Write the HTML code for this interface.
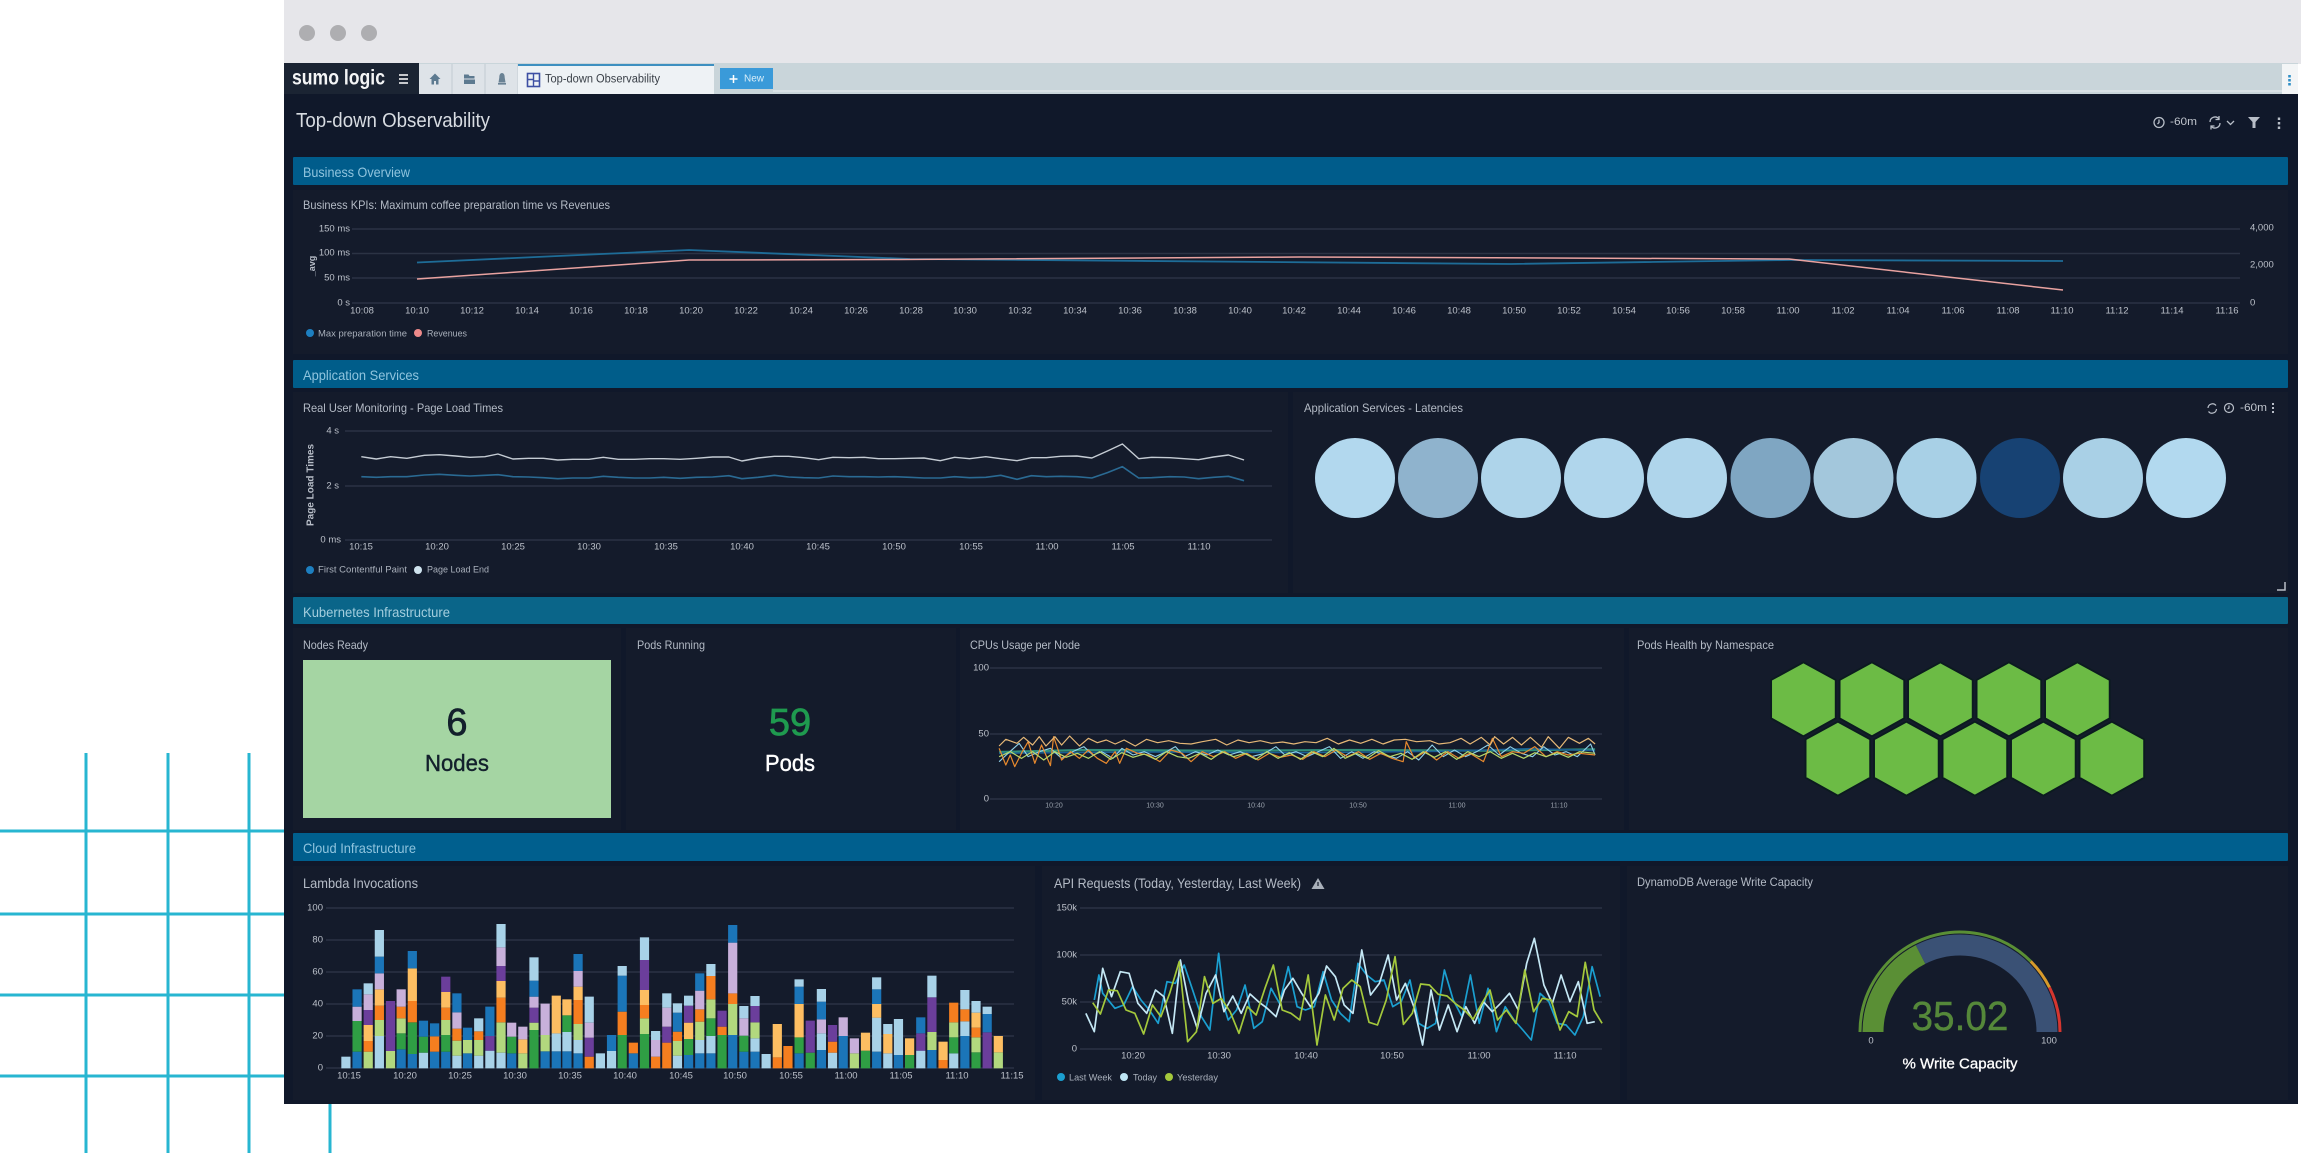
<!DOCTYPE html>
<html><head><meta charset="utf-8"><title>Top-down Observability</title>
<style>
html,body{margin:0;padding:0;background:#fff;width:2301px;height:1154px;overflow:hidden}
svg{display:block}
body>svg{filter:blur(.35px)}
text{font-family:"Liberation Sans",sans-serif;dominant-baseline:central}
.ln{fill:none;vector-effect:non-scaling-stroke;stroke-linejoin:round}
.tk{font-size:9.5px;fill:#bcc1ca}
.pt{font-size:12px;fill:#b4bbc6}
.bt{font-size:14px;fill:#8fc4de}
.lg{font-size:9.5px;fill:#aab1bc}
.gr{stroke:#2b3344;stroke-width:1.5}
.m{text-anchor:middle}
.e{text-anchor:end}
.bars path{fill:none;stroke-width:19}
.d{stroke:#1b75b8}.l{stroke:#a8d2e8}.g{stroke:#2f9e44}.h{stroke:#b2d87e}.o{stroke:#f57e1f}.y{stroke:#fdbe62}.p{stroke:#6b3e9b}.q{stroke:#c8b0da}
</style></head><body>
<svg width="2301" height="1154" viewBox="0 0 2301 1154" xmlns="http://www.w3.org/2000/svg">
<!-- background grid decoration -->
<g stroke="#27b6d1" stroke-width="3" fill="none">
<path d="M86 753V1153M168 753V1153M249 753V1153M330 1100V1153M0 831H290M0 914H290M0 995H290M0 1076H290"/>
</g>
<!-- browser chrome -->
<rect x="284" y="0" width="2017" height="64" fill="#e6e6ea"/>
<ellipse cx="307" cy="33" rx="8" ry="8" fill="#aeaeb1"/><ellipse cx="338" cy="33" rx="8" ry="8" fill="#aeaeb1"/><ellipse cx="369" cy="33" rx="8" ry="8" fill="#aeaeb1"/>
<!-- nav bar -->
<rect x="284" y="63" width="2014" height="31" fill="#c9d5da"/>
<rect x="773" y="90" width="1509" height="2" fill="#d9e1e5"/>
<rect x="419" y="64" width="99" height="30" fill="#dee3e8"/>
<path d="M452 64V94M485 64V94M518 64V94" stroke="#ccd3d9" stroke-width="1.5"/>
<rect x="284" y="63" width="135" height="31" fill="#1b2433"/>
<text x="292" y="78" font-size="21" font-weight="700" fill="#f4f5f6" textLength="93" lengthAdjust="spacingAndGlyphs">sumo logic</text>
<path d="M399 75h9M399 79h9M399 83h9" stroke="#fff" stroke-width="1.500"/>
<path d="M435 73.500l-5.500 5.500h2v5.500h2.500v-3.500h2v3.500h2.500v-5.500h2z" fill="#5d7a90"/>
<path d="M464 74.500h4.500l1 1.500h5v2.500h-10.500zM464 79.500h11v4.500h-11z" fill="#5d7a90"/>
<path d="M502 73c-1.800 0-2.700 1.800-2.700 4.500l-.8 5h7l-.8-5c0-2.700-.9-4.500-2.700-4.500zM498 83h8v1.600h-8z" fill="#6a8294"/>
<rect x="518" y="65" width="196" height="29" fill="#eef2f5"/>
<rect x="518" y="64" width="196" height="2" fill="#3d8fc0"/>
<rect x="527.500" y="73.500" width="12" height="13" fill="none" stroke="#3d4fa3" stroke-width="1.6"/>
<path d="M533.500 73v14M528 79.500h6M533 81h6" stroke="#3d4fa3" stroke-width="1.400"/>
<text x="545" y="79.500" font-size="11.500" fill="#3a4048" textLength="115" lengthAdjust="spacingAndGlyphs">Top-down Observability</text>
<rect x="720" y="68" width="53" height="21" fill="#3a9ad9"/>
<path d="M733.500 75v8M729.500 79h8" stroke="#fff" stroke-width="1.500"/>
<text x="744" y="79" font-size="10" fill="#d9eefa" textLength="20" lengthAdjust="spacingAndGlyphs">New</text>
<rect x="2282" y="64" width="16" height="30" fill="#f3f5f6"/>
<path d="M2289.500 75v2.500M2289.500 79v2.500M2289.500 83v2.500" stroke="#2f8fc7" stroke-width="2.600"/>
<!-- dark panel -->
<rect x="284" y="94" width="2014" height="1010" fill="#10182a"/>
<text x="296" y="121" font-size="20" fill="#d8dce2" textLength="194" lengthAdjust="spacingAndGlyphs">Top-down Observability</text>
<!-- toolbar -->
<g fill="none" stroke="#b8bec8" stroke-width="1.300">
<circle cx="2159" cy="122.500" r="5"/><path d="M2159 119.500v3l-1.500 1.500"/>
<path d="M2210 122a5 5 0 0 1 9-3M2220 123a5 5 0 0 1-9 3"/><path d="M2219 116v3.500h-3.500M2211 129.500v-3.500h3.500"/>
<path d="M2227 121l3.500 3.500 3.500-3.500"/>
</g>
<text x="2170" y="122" font-size="11" fill="#c0c5cd" textLength="27" lengthAdjust="spacingAndGlyphs">-60m</text>
<path d="M2248 117h12l-4.500 5v6h-3v-6z" fill="#b8bec8"/>
<path d="M2279 117.500v2.500M2279 122v2.500M2279 126.500v2.500" stroke="#b8bec8" stroke-width="2.400"/>
<!-- section bars -->
<rect x="293" y="157" width="1995" height="28" rx="1" fill="#005c8b"/>
<rect x="293" y="360" width="1995" height="28" rx="1" fill="#005d8a"/>
<rect x="293" y="597" width="1995" height="27" rx="1" fill="#0a6589"/>
<rect x="293" y="833" width="1995" height="28" rx="1" fill="#005f8e"/>
<text class="bt" x="303" y="172" textLength="107" lengthAdjust="spacingAndGlyphs">Business Overview</text>
<text class="bt" x="303" y="375" textLength="116" lengthAdjust="spacingAndGlyphs">Application Services</text>
<text class="bt" x="303" y="612" textLength="147" lengthAdjust="spacingAndGlyphs" style="fill:#a3cede">Kubernetes Infrastructure</text>
<text class="bt" x="303" y="848" textLength="113" lengthAdjust="spacingAndGlyphs">Cloud Infrastructure</text>
<!-- panels -->
<g fill="#141b2b">
<rect x="293" y="190" width="1995" height="164"/>
<rect x="293" y="392" width="995" height="201"/><rect x="1293" y="392" width="995" height="201"/>
<rect x="293" y="628" width="328" height="202"/><rect x="626" y="628" width="330" height="202"/><rect x="960" y="628" width="664" height="202"/><rect x="1629" y="628" width="659" height="202"/>
<rect x="293" y="866" width="742" height="234"/><rect x="1042" y="866" width="578" height="234"/><rect x="1627" y="866" width="661" height="234"/>
</g>
<!-- business chart -->
<text class="pt" x="303" y="205" textLength="307" lengthAdjust="spacingAndGlyphs">Business KPIs: Maximum coffee preparation time vs Revenues</text>
<path class="gr" d="M352 229H2240M352 253.500H2240M352 278H2240M352 303H2240"/>
<g class="tk e"><text x="350" y="229">150 ms</text><text x="350" y="253">100 ms</text><text x="350" y="278">50 ms</text><text x="350" y="303">0 s</text></g>
<text transform="translate(312 266) rotate(-90)" class="m" font-size="9" font-weight="700" fill="#b8bec8">_avg</text>
<g class="tk"><text x="2250" y="228">4,000</text><text x="2250" y="265">2,000</text><text x="2250" y="303">0</text></g>
<path class="ln" stroke="#1e6c97" stroke-width="1.800" d="M417 262.500L689 250 910 259 1511 264 1790 260 2063 261"/>
<path class="ln" stroke="#e9a2a0" stroke-width="1.500" d="M417 279L689 260 900 259.500 1300 257 1789 259 2063 290"/>
<g class="tk m">
<text x="362" y="311">10:08</text><text x="417" y="311">10:10</text><text x="472" y="311">10:12</text><text x="527" y="311">10:14</text><text x="581" y="311">10:16</text><text x="636" y="311">10:18</text><text x="691" y="311">10:20</text><text x="746" y="311">10:22</text><text x="801" y="311">10:24</text><text x="856" y="311">10:26</text><text x="911" y="311">10:28</text><text x="965" y="311">10:30</text><text x="1020" y="311">10:32</text><text x="1075" y="311">10:34</text><text x="1130" y="311">10:36</text><text x="1185" y="311">10:38</text><text x="1240" y="311">10:40</text><text x="1294" y="311">10:42</text><text x="1349" y="311">10:44</text><text x="1404" y="311">10:46</text><text x="1459" y="311">10:48</text><text x="1514" y="311">10:50</text><text x="1569" y="311">10:52</text><text x="1624" y="311">10:54</text><text x="1678" y="311">10:56</text><text x="1733" y="311">10:58</text><text x="1788" y="311">11:00</text><text x="1843" y="311">11:02</text><text x="1898" y="311">11:04</text><text x="1953" y="311">11:06</text><text x="2008" y="311">11:08</text><text x="2062" y="311">11:10</text><text x="2117" y="311">11:12</text><text x="2172" y="311">11:14</text><text x="2227" y="311">11:16</text>
</g>
<circle cx="310" cy="333" r="4" fill="#1d7fc0"/><text class="lg" x="318" y="334" textLength="89" lengthAdjust="spacingAndGlyphs">Max preparation time</text>
<circle cx="418" cy="333" r="4" fill="#ee8a8a"/><text class="lg" x="427" y="334" textLength="40" lengthAdjust="spacingAndGlyphs">Revenues</text>
<!-- RUM chart -->
<text class="pt" x="303" y="408" textLength="200" lengthAdjust="spacingAndGlyphs">Real User Monitoring - Page Load Times</text>
<path class="gr" d="M345 431H1272M345 486H1272M345 540H1272"/>
<g class="tk e"><text x="339" y="431">4 s</text><text x="339" y="486">2 s</text><text x="341" y="540">0 ms</text></g>
<text transform="translate(311 485) rotate(-90)" class="m" font-size="10" font-weight="700" fill="#b8bec8">Page Load Times</text>
<svg x="280" y="360" width="1020" height="240" viewBox="0 0 1568 720" preserveAspectRatio="none">
<path class="ln" stroke="#c5ccd4" stroke-width="1.400" d="M125 290L148 297 170 290 195 295 222 286 245 284 270 288 292 292 315 290 335 282 358 297 382 295 405 295 427 300 450 298 475 298 497 292 520 298 545 298 568 296 590 296 615 298 640 295 665 291 690 291 710 303 735 294 760 289 782 289 805 293 828 299 850 292 875 293 898 292 920 296 945 296 968 295 990 294 1015 302 1037 292 1060 296 1085 290 1108 296 1133 302 1155 293 1178 293 1200 289 1225 288 1248 294 1272 273 1295 252 1320 296 1340 292 1368 293 1390 296 1412 299 1435 291 1458 285 1482 300"/>
<path class="ln" stroke="#2a6a93" stroke-width="1.600" d="M125 350L148 352 170 350 195 350 222 345 245 343 270 346 292 348 315 346 335 344 358 350 382 351 405 353 427 356 450 354 475 354 497 349 520 352 545 354 568 354 590 352 615 355 640 352 665 351 690 347 710 356 735 352 760 346 782 351 805 353 828 354 850 348 875 350 898 350 920 351 945 350 968 352 990 354 1015 354 1037 350 1060 353 1085 352 1108 346 1133 358 1155 347 1178 350 1200 349 1225 350 1248 354 1272 338 1295 320 1320 354 1340 353 1368 350 1390 351 1412 356 1435 352 1458 349 1482 362"/>
</svg>
<g class="tk m">
<text x="361" y="547">10:15</text><text x="437" y="547">10:20</text><text x="513" y="547">10:25</text><text x="589" y="547">10:30</text><text x="666" y="547">10:35</text><text x="742" y="547">10:40</text><text x="818" y="547">10:45</text><text x="894" y="547">10:50</text><text x="971" y="547">10:55</text><text x="1047" y="547">11:00</text><text x="1123" y="547">11:05</text><text x="1199" y="547">11:10</text>
</g>
<circle cx="310" cy="570" r="4" fill="#1d7fc0"/><text class="lg" x="318" y="570" textLength="89" lengthAdjust="spacingAndGlyphs">First Contentful Paint</text>
<circle cx="418" cy="570" r="4" fill="#cfe3ee"/><text class="lg" x="427" y="570" textLength="62" lengthAdjust="spacingAndGlyphs">Page Load End</text>
<!-- Latencies -->
<text class="pt" x="1304" y="408" textLength="159" lengthAdjust="spacingAndGlyphs">Application Services - Latencies</text>
<g fill="none" stroke="#b8bec8" stroke-width="1.200">
<path d="M2208 408a4.500 4.500 0 0 1 8-2.500M2216.500 409a4.500 4.500 0 0 1-8 2.500"/><circle cx="2229" cy="408" r="4.500"/><path d="M2229 405.500v2.500l-1.500 1"/>
</g>
<text x="2240" y="408" font-size="11" fill="#c0c5cd" textLength="27" lengthAdjust="spacingAndGlyphs">-60m</text>
<path d="M2273 403v2M2273 407v2M2273 411v2" stroke="#b8bec8" stroke-width="2"/>
<circle cx="1355" cy="478" r="40" fill="#b2d8ee"/><circle cx="1438" cy="478" r="40" fill="#8fb3cd"/><circle cx="1521" cy="478" r="40" fill="#aed4ea"/><circle cx="1604" cy="478" r="40" fill="#b0d6ec"/><circle cx="1687" cy="478" r="40" fill="#afd5eb"/><circle cx="1770.500" cy="478" r="40" fill="#7fa6c2"/><circle cx="1853.500" cy="478" r="40" fill="#a3c7dc"/><circle cx="1936.500" cy="478" r="40" fill="#a8d0e6"/><circle cx="2020" cy="478" r="40" fill="#174273"/><circle cx="2103" cy="478" r="40" fill="#a9d0e6"/><circle cx="2186" cy="478" r="40" fill="#b2d9ef"/>
<path d="M2285 582v8h-8" fill="none" stroke="#b8bec8" stroke-width="1.500"/>
<!-- K8s -->
<text class="pt" x="303" y="645" textLength="65" lengthAdjust="spacingAndGlyphs">Nodes Ready</text>
<rect x="303" y="660" width="308" height="158" fill="#a5d5a3"/>
<text class="m" x="457" y="723" font-size="38" fill="#13202c" stroke="#13202c" stroke-width=".7">6</text>
<text class="m" x="457" y="763" font-size="23" fill="#13202c" stroke="#13202c" stroke-width=".4" textLength="64" lengthAdjust="spacingAndGlyphs">Nodes</text>
<text class="pt" x="637" y="645" textLength="68" lengthAdjust="spacingAndGlyphs">Pods Running</text>
<text class="m" x="790" y="723" font-size="38" fill="#1f9a4f" stroke="#1f9a4f" stroke-width=".7">59</text>
<text class="m" x="790" y="763" font-size="23" fill="#fff" stroke="#fff" stroke-width=".4" textLength="50" lengthAdjust="spacingAndGlyphs">Pods</text>
<text class="pt" x="970" y="645" textLength="110" lengthAdjust="spacingAndGlyphs">CPUs Usage per Node</text>
<path class="gr" d="M990 668H1602M990 734H1602M990 799H1602"/>
<g class="tk e"><text x="989" y="668">100</text><text x="989" y="734">50</text><text x="989" y="799">0</text></g>
<g class="m" font-size="7" fill="#9aa2ad"><text x="1054" y="806">10:20</text><text x="1155" y="806">10:30</text><text x="1256" y="806">10:40</text><text x="1358" y="806">10:50</text><text x="1457" y="806">11:00</text><text x="1559" y="806">11:10</text></g>
<svg x="950" y="620" width="700" height="220" viewBox="0 0 1568 660" preserveAspectRatio="none">
<path class="ln" stroke="#2f8f7a" stroke-width="2.200" d="M110 396L300 390 600 392 900 390 1200 392 1445 388"/>
<path class="ln" stroke="#1b5f94" stroke-width="1.500" d="M110 400L400 396 800 398 1100 394 1300 386 1445 392"/>
<path class="ln" stroke="#8fd0e8" stroke-width="1.100" d="M110 425L130 400 155 370 175 410 200 395 225 385 250 415 275 395 300 380 320 405 340 395 365 415 385 385 410 405 435 395 460 410 485 395 505 380 525 410 550 395 575 405 600 390 625 405 650 395 675 410 705 400 730 380 750 405 775 395 800 410 825 395 850 380 875 415 900 395 925 415 950 395 975 405 1000 415 1025 395 1050 420 1080 375 1105 410 1130 390 1155 410 1180 395 1205 375 1230 405 1255 380 1280 400 1305 410 1330 380 1355 405 1380 395 1405 410 1435 372 1445 405"/>
<path class="ln" stroke="#e88a2e" stroke-width="1.200" d="M110 385L125 435 135 405 145 440 160 400 175 365 190 430 205 375 225 437 232 350 250 420 270 395 290 415 310 390 330 415 350 430 370 395 380 430 395 385 420 400 445 405 470 425 495 390 520 400 540 425 565 395 590 410 615 395 640 415 665 400 690 420 715 400 740 412 765 405 790 418 815 395 840 410 865 390 890 410 915 395 940 418 965 400 990 415 1015 425 1022 365 1040 415 1065 395 1090 420 1115 395 1140 415 1165 400 1195 425 1215 355 1235 410 1260 395 1285 400 1310 380 1335 410 1360 395 1385 405 1410 400 1445 405"/>
<path class="ln" stroke="#b7d86a" stroke-width="1.200" d="M110 410L135 395 160 415 185 395 210 420 235 395 260 412 285 400 310 415 335 395 360 418 385 398 410 412 435 402 460 418 485 395 510 410 535 415 560 400 585 418 610 395 635 410 660 400 685 418 710 395 735 415 760 398 785 418 810 395 835 410 860 385 885 415 910 400 935 415 960 392 985 410 1010 400 1035 418 1060 395 1085 412 1110 395 1135 418 1160 395 1185 410 1210 395 1235 415 1260 400 1285 415 1310 398 1335 410 1360 398 1385 412 1410 395 1445 400"/>
<path class="ln" stroke="#e6b877" stroke-width="1.200" d="M110 378L125 358 150 370 165 352 185 375 200 350 215 378 235 350 250 375 268 348 290 378 310 355 330 368 350 360 370 372 390 360 415 378 440 358 465 368 490 362 515 370 540 372 565 365 595 358 620 375 645 360 670 368 695 362 720 370 745 366 770 372 795 365 820 368 845 355 870 372 895 360 920 370 945 358 970 372 995 360 1020 358 1045 365 1075 362 1095 372 1120 368 1145 355 1165 372 1190 352 1210 375 1220 350 1240 372 1260 352 1280 375 1300 352 1325 382 1340 350 1365 385 1385 352 1410 370 1430 355 1445 372"/>
</svg>
<text class="pt" x="1637" y="645" textLength="137" lengthAdjust="spacingAndGlyphs">Pods Health by Namespace</text>
<svg x="1618" y="620" width="681" height="220" viewBox="0 0 1561 660" preserveAspectRatio="none">
<path class="ln" style="fill:#6cbb45" stroke="#0b1b1f" stroke-width="1.800" d="M425 127l74 53v115l-74 54-74-54v-115zM582 127l74 53v115l-74 54-74-54v-115zM739 127l74 53v115l-74 54-74-54v-115zM896 127l74 53v115l-74 54-74-54v-115zM1053 127l74 53v115l-74 54-74-54v-115zM504 305l74 53v115l-74 54-74-54v-115zM661 305l74 53v115l-74 54-74-54v-115zM818 305l74 53v115l-74 54-74-54v-115zM975 305l74 53v115l-74 54-74-54v-115zM1132 305l74 53v115l-74 54-74-54v-115z"/>
</svg>
<!-- Lambda -->
<text class="pt" x="303" y="883" style="font-size:14px" textLength="115" lengthAdjust="spacingAndGlyphs">Lambda Invocations</text>
<path class="gr" d="M326 908H1014M326 940H1014M326 972H1014M326 1004H1014M326 1036H1014M326 1068H1014"/>
<g class="tk e"><text x="323" y="908">100</text><text x="323" y="940">80</text><text x="323" y="972">60</text><text x="323" y="1004">40</text><text x="323" y="1036">20</text><text x="323" y="1068">0</text></g>
<svg x="280" y="860" width="760" height="250" viewBox="0 0 1568 750" preserveAspectRatio="none" class="bars">
<path class="l" d="M136 625V590"/>
<path class="d" d="M159 625V575"/><path class="g" d="M159 575V483"/><path class="q" d="M159 483V440"/><path class="d" d="M159 440V388"/>
<path class="h" d="M182 625V575"/><path class="o" d="M182 575V543"/><path class="y" d="M182 543V495"/><path class="p" d="M182 495V450"/><path class="q" d="M182 450V403"/><path class="l" d="M182 403V370"/>
<path class="l" d="M205 625V528"/><path class="h" d="M205 528V480"/><path class="o" d="M205 480V437"/><path class="y" d="M205 437V388"/><path class="q" d="M205 388V340"/><path class="d" d="M205 340V290"/><path class="l" d="M205 290V210"/>
<path class="h" d="M228 625V573"/><path class="p" d="M228 573V423"/>
<path class="d" d="M250 625V568"/><path class="g" d="M250 568V520"/><path class="h" d="M250 520V475"/><path class="o" d="M250 475V440"/><path class="q" d="M250 440V388"/>
<path class="d" d="M273 625V582"/><path class="g" d="M273 582V487"/><path class="o" d="M273 487V423"/><path class="y" d="M273 423V325"/><path class="d" d="M273 325V273"/>
<path class="l" d="M296 625V578"/><path class="g" d="M296 578V530"/><path class="d" d="M296 530V482"/>
<path class="d" d="M319 625V575"/><path class="o" d="M319 575V529"/><path class="d" d="M319 529V490"/>
<path class="d" d="M342 625V575"/><path class="g" d="M342 575V525"/><path class="h" d="M342 525V480"/><path class="o" d="M342 480V443"/><path class="y" d="M342 443V396"/><path class="p" d="M342 396V350"/>
<path class="l" d="M365 625V587"/><path class="h" d="M365 587V542"/><path class="o" d="M365 542V506"/><path class="q" d="M365 506V457"/><path class="d" d="M365 457V400"/>
<path class="d" d="M387 625V580"/><path class="h" d="M387 580V540"/><path class="d" d="M387 540V503"/>
<path class="l" d="M410 625V587"/><path class="h" d="M410 587V540"/><path class="o" d="M410 540V514"/><path class="l" d="M410 514V475"/>
<path class="l" d="M433 625V572"/><path class="p" d="M433 572V528"/><path class="d" d="M433 528V440"/>
<path class="l" d="M456 625V578"/><path class="h" d="M456 578V487"/><path class="o" d="M456 487V413"/><path class="y" d="M456 413V363"/><path class="p" d="M456 363V318"/><path class="q" d="M456 318V262"/><path class="l" d="M456 262V192"/>
<path class="d" d="M478 625V580"/><path class="g" d="M478 580V530"/><path class="q" d="M478 530V488"/>
<path class="h" d="M501 625V580"/><path class="y" d="M501 580V538"/><path class="q" d="M501 538V500"/>
<path class="g" d="M524 625V510"/><path class="h" d="M524 510V488"/><path class="p" d="M524 488V443"/><path class="q" d="M524 443V410"/><path class="d" d="M524 410V362"/><path class="l" d="M524 362V292"/>
<path class="d" d="M547 625V574"/><path class="h" d="M547 574V525"/><path class="q" d="M547 525V431"/>
<path class="d" d="M570 625V574"/><path class="l" d="M570 574V520"/><path class="y" d="M570 520V407"/>
<path class="d" d="M592 625V574"/><path class="l" d="M592 574V516"/><path class="g" d="M592 516V466"/><path class="y" d="M592 466V418"/>
<path class="d" d="M615 625V580"/><path class="l" d="M615 580V540"/><path class="h" d="M615 540V492"/><path class="o" d="M615 492V420"/><path class="y" d="M615 420V380"/><path class="q" d="M615 380V333"/><path class="d" d="M615 333V282"/>
<path class="o" d="M638 625V590"/><path class="p" d="M638 590V533"/><path class="q" d="M638 533V488"/><path class="l" d="M638 488V410"/>
<path class="l" d="M661 625V580"/>
<path class="l" d="M684 625V573"/><path class="d" d="M684 573V525"/>
<path class="g" d="M706 625V525"/><path class="o" d="M706 525V455"/><path class="d" d="M706 455V347"/><path class="l" d="M706 347V318"/>
<path class="d" d="M729 625V580"/><path class="o" d="M729 580V548"/>
<path class="g" d="M752 625V522"/><path class="h" d="M752 522V475"/><path class="o" d="M752 475V435"/><path class="y" d="M752 435V390"/><path class="p" d="M752 390V300"/><path class="l" d="M752 300V232"/>
<path class="o" d="M775 625V590"/><path class="q" d="M775 590V540"/><path class="l" d="M775 540V513"/>
<path class="o" d="M798 625V548"/><path class="p" d="M798 548V500"/><path class="q" d="M798 500V443"/><path class="l" d="M798 443V400"/>
<path class="l" d="M820 625V587"/><path class="h" d="M820 587V543"/><path class="o" d="M820 543V515"/><path class="d" d="M820 515V458"/><path class="l" d="M820 458V430"/>
<path class="d" d="M843 625V585"/><path class="g" d="M843 585V537"/><path class="y" d="M843 537V488"/><path class="p" d="M843 488V437"/><path class="l" d="M843 437V407"/>
<path class="d" d="M866 625V580"/><path class="l" d="M866 580V540"/><path class="h" d="M866 540V485"/><path class="o" d="M866 485V448"/><path class="q" d="M866 448V392"/><path class="d" d="M866 392V340"/>
<path class="d" d="M889 625V580"/><path class="l" d="M889 580V528"/><path class="g" d="M889 528V475"/><path class="h" d="M889 475V418"/><path class="o" d="M889 418V348"/><path class="l" d="M889 348V312"/>
<path class="g" d="M912 625V525"/><path class="o" d="M912 525V500"/><path class="p" d="M912 500V452"/>
<path class="d" d="M934 625V525"/><path class="h" d="M934 525V432"/><path class="o" d="M934 432V400"/><path class="q" d="M934 400V248"/><path class="d" d="M934 248V195"/>
<path class="d" d="M957 625V575"/><path class="g" d="M957 575V527"/><path class="q" d="M957 527V475"/><path class="l" d="M957 475V438"/>
<path class="d" d="M980 625V575"/><path class="l" d="M980 575V535"/><path class="h" d="M980 535V487"/><path class="p" d="M980 487V438"/><path class="l" d="M980 438V408"/>
<path class="l" d="M1003 625V582"/>
<path class="o" d="M1026 625V592"/><path class="y" d="M1026 592V492"/>
<path class="o" d="M1048 625V558"/>
<path class="d" d="M1071 625V580"/><path class="g" d="M1071 580V532"/><path class="y" d="M1071 532V432"/><path class="d" d="M1071 432V380"/><path class="l" d="M1071 380V358"/>
<path class="g" d="M1094 625V578"/><path class="p" d="M1094 578V482"/>
<path class="d" d="M1117 625V570"/><path class="l" d="M1117 570V520"/><path class="q" d="M1117 520V478"/><path class="d" d="M1117 478V425"/><path class="l" d="M1117 425V387"/>
<path class="l" d="M1140 625V578"/><path class="o" d="M1140 578V545"/><path class="p" d="M1140 545V495"/>
<path class="d" d="M1162 625V528"/><path class="q" d="M1162 528V472"/>
<path class="h" d="M1185 625V580"/><path class="q" d="M1185 580V535"/>
<path class="g" d="M1208 625V572"/><path class="y" d="M1208 572V518"/>
<path class="d" d="M1231 625V575"/><path class="l" d="M1231 575V473"/><path class="y" d="M1231 473V432"/><path class="d" d="M1231 432V388"/><path class="l" d="M1231 388V352"/>
<path class="l" d="M1254 625V580"/><path class="y" d="M1254 580V522"/><path class="l" d="M1254 522V492"/>
<path class="d" d="M1276 625V585"/><path class="l" d="M1276 585V477"/>
<path class="g" d="M1299 625V585"/><path class="y" d="M1299 585V535"/>
<path class="l" d="M1322 625V572"/><path class="p" d="M1322 572V520"/><path class="d" d="M1322 520V472"/>
<path class="d" d="M1345 625V570"/><path class="h" d="M1345 570V516"/><path class="p" d="M1345 516V412"/><path class="l" d="M1345 412V347"/>
<path class="o" d="M1368 625V600"/><path class="y" d="M1368 600V545"/>
<path class="l" d="M1390 625V580"/><path class="g" d="M1390 580V532"/><path class="h" d="M1390 532V487"/><path class="o" d="M1390 487V428"/>
<path class="d" d="M1413 625V528"/><path class="l" d="M1413 528V484"/><path class="o" d="M1413 484V448"/><path class="l" d="M1413 448V390"/>
<path class="g" d="M1436 625V577"/><path class="h" d="M1436 577V532"/><path class="o" d="M1436 532V503"/><path class="y" d="M1436 503V458"/><path class="l" d="M1436 458V423"/>
<path class="p" d="M1459 625V517"/><path class="d" d="M1459 517V462"/><path class="l" d="M1459 462V440"/>
<path class="h" d="M1482 625V577"/><path class="y" d="M1482 577V528"/>
</svg>
<g class="tk m">
<text x="349" y="1076">10:15</text><text x="405" y="1076">10:20</text><text x="460" y="1076">10:25</text><text x="515" y="1076">10:30</text><text x="570" y="1076">10:35</text><text x="625" y="1076">10:40</text><text x="681" y="1076">10:45</text><text x="735" y="1076">10:50</text><text x="791" y="1076">10:55</text><text x="846" y="1076">11:00</text><text x="901" y="1076">11:05</text><text x="957" y="1076">11:10</text><text x="1012" y="1076">11:15</text>
</g>
<!-- API -->
<text class="pt" x="1054" y="883" style="font-size:14px" textLength="247" lengthAdjust="spacingAndGlyphs">API Requests (Today, Yesterday, Last Week)</text>
<path d="M1318 878l6.500 11h-13z" fill="#a9b0ba"/><path d="M1318 882v4" stroke="#151c2c" stroke-width="1.200"/>
<path class="gr" d="M1080 908H1602M1080 955H1602M1080 1002H1602M1080 1049H1602"/>
<g class="tk e"><text x="1077" y="908">150k</text><text x="1077" y="955">100k</text><text x="1077" y="1002">50k</text><text x="1077" y="1049">0</text></g>
<svg x="1030" y="860" width="600" height="250" viewBox="0 0 1568 750" preserveAspectRatio="none">
<path class="ln" stroke="#1b9fd0" stroke-width="1.700" d="M168 420L180 345 190 400 222 445 245 435 268 380 290 420 312 450 335 490 358 365 380 370 403 315 425 390 448 470 470 510 493 280 510 450 518 480 540 450 562 375 585 505 607 485 630 385 652 430 675 320 698 440 720 450 743 440 766 335 788 420 811 460 834 485 857 310 880 345 902 365 925 360 948 440 970 425 993 360 1016 490 1038 505 1060 490 1083 330 1106 420 1129 470 1151 345 1174 490 1197 385 1219 515 1242 440 1265 480 1288 510 1310 540 1333 400 1356 425 1378 490 1401 495 1424 525 1446 470 1469 320 1490 410"/>
<path class="ln" stroke="#c5e8f5" stroke-width="1.700" d="M146 460L168 515 190 325 213 410 236 335 259 340 282 430 305 460 328 390 350 410 372 520 393 300 415 430 437 505 460 400 485 345 507 455 530 408 552 460 575 402 597 425 620 445 643 470 665 390 687 355 710 400 733 440 755 400 775 318 798 350 821 435 844 460 867 270 890 405 913 370 936 285 958 420 981 370 1003 440 1026 555 1048 390 1070 510 1093 435 1116 515 1139 440 1162 490 1185 425 1208 455 1230 430 1253 400 1276 450 1298 310 1318 235 1343 375 1365 430 1388 345 1411 425 1433 365 1456 490 1476 485"/>
<path class="ln" stroke="#a4c83c" stroke-width="1.700" d="M164 428L184 462 205 390 228 392 251 450 274 460 297 522 320 435 342 470 365 400 390 305 412 545 435 515 456 350 478 430 500 415 523 455 546 520 568 440 591 465 614 385 636 315 659 450 682 460 705 480 727 345 750 555 772 405 795 480 818 385 841 360 863 380 886 487 908 495 931 420 954 290 976 493 999 460 1021 372 1044 375 1067 403 1090 408 1113 432 1135 450 1158 478 1181 430 1202 390 1222 480 1245 450 1270 490 1293 330 1316 455 1339 415 1362 420 1385 510 1408 455 1430 470 1451 307 1474 450 1495 490"/>
</svg>
<g class="tk m"><text x="1133" y="1056">10:20</text><text x="1219" y="1056">10:30</text><text x="1306" y="1056">10:40</text><text x="1392" y="1056">10:50</text><text x="1479" y="1056">11:00</text><text x="1565" y="1056">11:10</text></g>
<circle cx="1061" cy="1077" r="4" fill="#1b9fd0"/><text class="lg" x="1069" y="1078" textLength="43" lengthAdjust="spacingAndGlyphs">Last Week</text>
<circle cx="1124" cy="1077" r="4" fill="#bfe6f5"/><text class="lg" x="1133" y="1078" textLength="24" lengthAdjust="spacingAndGlyphs">Today</text>
<circle cx="1169" cy="1077" r="4" fill="#a4c83c"/><text class="lg" x="1177" y="1078" textLength="41" lengthAdjust="spacingAndGlyphs">Yesterday</text>
<!-- Gauge -->
<text class="pt" x="1637" y="882" textLength="176" lengthAdjust="spacingAndGlyphs">DynamoDB Average Write Capacity</text>
<g fill="none">
<path d="M1920.500 954.500A87 87 0 0 1 2047 1032" stroke="#3a5175" stroke-width="21"/>
<path d="M1873 1032A87 87 0 0 1 1920.500 954.500" stroke="#5a8f35" stroke-width="21"/>
<path d="M1860 1032A100 100 0 0 1 2030.700 961.300" stroke="#5a8f35" stroke-width="3"/>
<path d="M2030.700 961.300A100 100 0 0 1 2049.500 987.400" stroke="#d79a2b" stroke-width="3"/>
<path d="M2049.500 987.400A100 100 0 0 1 2060 1032" stroke="#d6362f" stroke-width="3"/>
</g>
<text class="m" x="1960" y="1016" font-size="41" fill="#55883a" stroke="#55883a" stroke-width=".4" textLength="97" lengthAdjust="spacingAndGlyphs">35.02</text>
<text class="tk m" x="1871" y="1041">0</text><text class="tk m" x="2049" y="1041">100</text>
<text class="m" x="1960" y="1064" font-size="15" fill="#fff" stroke="#fff" stroke-width=".3" textLength="115" lengthAdjust="spacingAndGlyphs">% Write Capacity</text>
</svg>
</body></html>
